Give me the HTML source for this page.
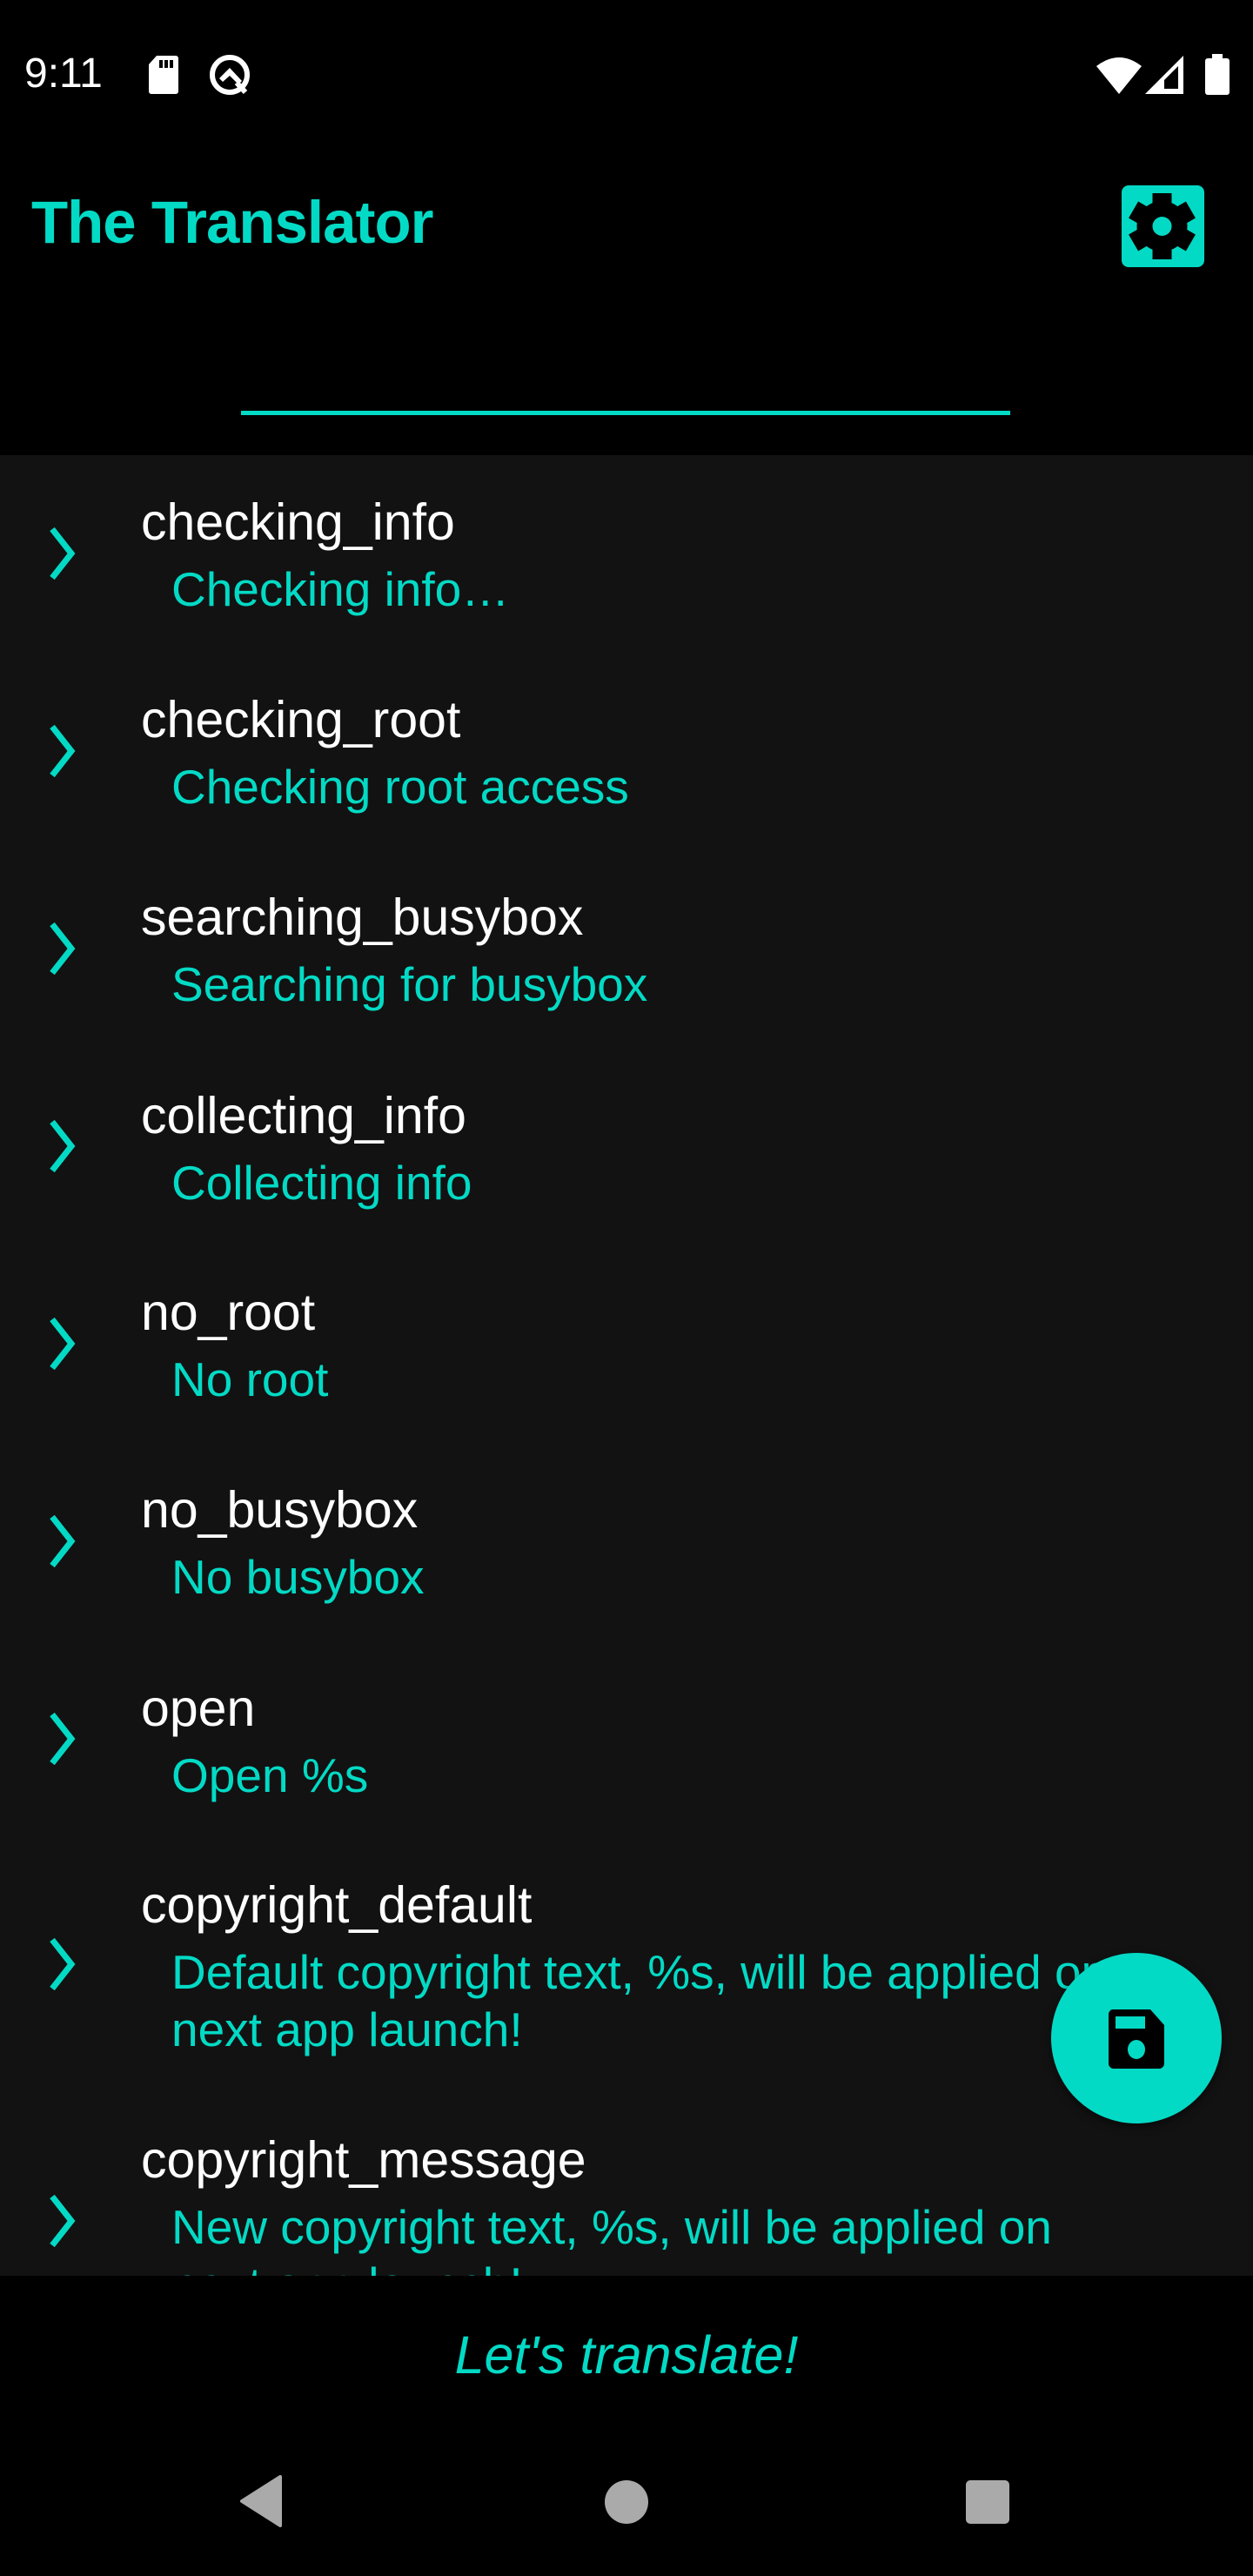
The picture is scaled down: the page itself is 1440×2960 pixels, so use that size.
<!DOCTYPE html>
<html><head><meta charset="utf-8">
<style>
html,body{margin:0;padding:0;}
body{width:1440px;height:2960px;background:#000;position:relative;overflow:hidden;font-family:"Liberation Sans",sans-serif;}
.a{position:absolute;}
.list{position:absolute;left:0;top:523px;width:1440px;height:2092px;background:#121212;overflow:hidden;}
.k{position:absolute;left:162px;color:#fff;font-size:59px;line-height:60px;white-space:nowrap;}
.v{position:absolute;left:197px;color:#03dac5;font-size:55px;line-height:66px;white-space:nowrap;}
.ch{position:absolute;left:50px;width:40px;height:64px;}
</style></head><body>
<div class="a" style="left:28px;top:60px;color:#fff;font-size:48px;line-height:50px;">9:11</div>
<svg class="a" style="left:168px;top:62px" width="40" height="48" viewBox="0 0 40 48"><path d="M12 2H34a3 3 0 0 1 3 3V43a3 3 0 0 1-3 3H6a3 3 0 0 1-3-3V12Z" fill="#fff"/><rect x="15" y="7" width="4" height="9" fill="#000"/><rect x="21" y="7" width="4" height="9" fill="#000"/><rect x="27" y="7" width="4" height="9" fill="#000"/></svg>
<svg class="a" style="left:238px;top:60px" width="52" height="52" viewBox="0 0 52 52"><circle cx="26" cy="26" r="20" fill="none" stroke="#fff" stroke-width="6"/><path d="M14 30L26 18L40 33L36 37L26 27L18 34Z" fill="#fff"/><path d="M34 35L44 46" stroke="#fff" stroke-width="6"/></svg>
<svg class="a" style="left:1258px;top:62px" width="56" height="48" viewBox="0 0 56 48"><path d="M2 14Q28 -6 54 14L28 46Z" fill="#fff"/></svg>
<svg class="a" style="left:1314px;top:62px" width="48" height="48" viewBox="0 0 48 48"><path d="M46 2V46H2Z" fill="#fff"/><path d="M40 14V40H24V30Z" fill="#000"/></svg>
<svg class="a" style="left:1384px;top:62px" width="30" height="48" viewBox="0 0 30 48"><rect x="9" y="0" width="12" height="6" fill="#fff"/><rect x="1" y="5" width="28" height="42" rx="3" fill="#fff"/></svg>
<div class="a" style="left:36px;top:218px;color:#03dac5;font-size:69px;font-weight:bold;line-height:76px;letter-spacing:-1px;">The Translator</div>
<svg class="a" style="left:1289px;top:213px" width="95" height="94" viewBox="0 0 95 94"><rect width="95" height="94" rx="8" fill="#03dac5"/>
<g transform="translate(46.5 47)" fill="#000"><circle r="29"/><rect x="-11" y="-38" width="22" height="16"/><rect x="-11" y="-38" width="22" height="16" transform="rotate(60)"/><rect x="-11" y="-38" width="22" height="16" transform="rotate(120)"/><rect x="-11" y="-38" width="22" height="16" transform="rotate(180)"/><rect x="-11" y="-38" width="22" height="16" transform="rotate(240)"/><rect x="-11" y="-38" width="22" height="16" transform="rotate(300)"/><circle r="11" fill="#03dac5"/></g></svg>
<div class="a" style="left:277px;top:472px;width:884px;height:5px;background:#03dac5;"></div>
<div class="list">
<svg width="0" height="0" style="position:absolute"><defs><path id="cv" d="M10 4L32 32L10 60" fill="none" stroke="#03dac5" stroke-width="7"/></defs></svg>
<svg class="ch" style="top:81px"><use href="#cv"/></svg>
<div class="k" style="top:47px">checking_info</div><div class="v" style="top:121px">Checking info…</div>
<svg class="ch" style="top:308px"><use href="#cv"/></svg>
<div class="k" style="top:274px">checking_root</div><div class="v" style="top:348px">Checking root access</div>
<svg class="ch" style="top:535px"><use href="#cv"/></svg>
<div class="k" style="top:501px">searching_busybox</div><div class="v" style="top:575px">Searching for busybox</div>
<svg class="ch" style="top:762px"><use href="#cv"/></svg>
<div class="k" style="top:729px">collecting_info</div><div class="v" style="top:803px">Collecting info</div>
<svg class="ch" style="top:989px"><use href="#cv"/></svg>
<div class="k" style="top:955px">no_root</div><div class="v" style="top:1029px">No root</div>
<svg class="ch" style="top:1216px"><use href="#cv"/></svg>
<div class="k" style="top:1182px">no_busybox</div><div class="v" style="top:1256px">No busybox</div>
<svg class="ch" style="top:1443px"><use href="#cv"/></svg>
<div class="k" style="top:1410px">open</div><div class="v" style="top:1484px">Open %s</div>
<svg class="ch" style="top:1702px"><use href="#cv"/></svg>
<div class="k" style="top:1636px">copyright_default</div><div class="v" style="top:1710px">Default copyright text, %s, will be applied on<br>next app launch!</div>
<svg class="ch" style="top:1997px"><use href="#cv"/></svg>
<div class="k" style="top:1929px">copyright_message</div><div class="v" style="top:2003px">New copyright text, %s, will be applied on<br>next app launch!</div>
</div>
<div class="a" style="left:1208px;top:2244px;width:196px;height:196px;border-radius:50%;background:#03dac5;box-shadow:0 4px 10px rgba(0,0,0,.5);"></div>
<svg class="a" style="left:1272px;top:2307px" width="68" height="72" viewBox="0 0 68 72"><path d="M6 2H50L66 20V64a6 6 0 0 1-6 6H8a6 6 0 0 1-6-6V8a6 6 0 0 1 4-6Z" fill="#000"/><rect x="10" y="10" width="34" height="14" fill="#03dac5"/><ellipse cx="34" cy="48" rx="10" ry="11" fill="#03dac5"/></svg>
<div class="a" style="left:0;top:2672px;width:1440px;text-align:center;color:#03dac5;font-size:61px;font-style:italic;line-height:68px;">Let's translate!</div>
<svg class="a" style="left:274px;top:2844px" width="52" height="60" viewBox="0 0 52 60"><path d="M48 2V58L4 30Z" fill="#aaa" stroke="#aaa" stroke-width="4" stroke-linejoin="round"/></svg>
<div class="a" style="left:695px;top:2850px;width:50px;height:50px;border-radius:50%;background:#aaa;"></div>
<div class="a" style="left:1110px;top:2850px;width:50px;height:50px;border-radius:5px;background:#aaa;"></div>
</body></html>
